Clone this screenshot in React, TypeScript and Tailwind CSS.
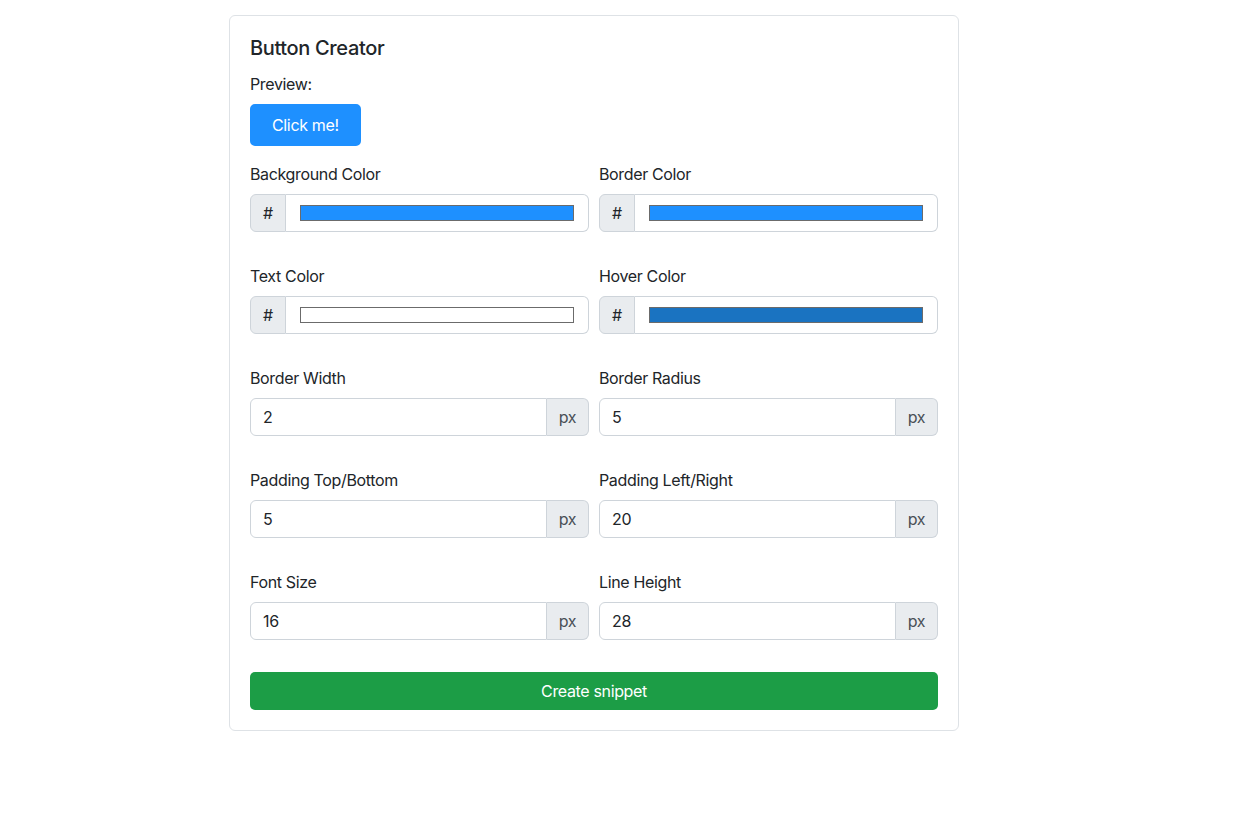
import React from 'react';

const font = { fontFamily: 'Inter, "Noto Sans", sans-serif' };

function ColorField({ label, color }: { label: string; color: string }) {
  return (
    <div className="flex flex-col">
      <label className="text-[16px] leading-6 text-[#212529] mb-2">{label}</label>
      <div className="flex h-[38px]">
        <span className="w-[36px] flex items-center justify-center bg-[#e9ecef] border border-[#ced4da] rounded-l-[6px] text-[16px] text-[#212529]">
          #
        </span>
        <div className="flex-1 border border-l-0 border-[#ced4da] rounded-r-[6px] bg-white pl-[14px] pr-[14px] py-[10px]">
          <div className="w-full h-full border border-[#6b6b6b]" style={{ backgroundColor: color }} />
        </div>
      </div>
    </div>
  );
}

function PxField({ label, value }: { label: string; value: string }) {
  return (
    <div className="flex flex-col">
      <label className="text-[16px] leading-6 text-[#212529] mb-2">{label}</label>
      <div className="flex h-[38px]">
        <div className="flex-1 flex items-center px-3 border border-[#ced4da] rounded-l-[6px] bg-white text-[16px] text-[#212529]">
          {value}
        </div>
        <span className="w-[42px] flex items-center justify-center bg-[#e9ecef] border border-l-0 border-[#ced4da] rounded-r-[6px] text-[16px] text-[#495057]">
          px
        </span>
      </div>
    </div>
  );
}

export default function App() {
  return (
    <div className="min-h-screen bg-white tracking-[-0.022em]" style={font}>
      <div className="pt-[15px] pl-[229px]">
        <div className="w-[730px] border border-[#dee2e6] rounded-[6px] p-5">
          <h5 className="text-[20px] leading-6 font-medium text-[#212529]">Button Creator</h5>
          <p className="mt-3 text-[16px] leading-6 text-[#212529]">Preview:</p>
          <div className="mt-2">
            <button
              className="text-white text-[16px] leading-[28px] py-[5px] px-5 rounded-[5px] border-2 border-[#1e90ff] bg-[#1e90ff] tracking-[-0.022em]"
            >
              Click me!
            </button>
          </div>
          <div className="mt-4 grid grid-cols-2 gap-x-[10px] gap-y-8">
            <ColorField label="Background Color" color="#1e90ff" />
            <ColorField label="Border Color" color="#1e90ff" />
            <ColorField label="Text Color" color="#ffffff" />
            <ColorField label="Hover Color" color="#1a73c1" />
            <PxField label="Border Width" value="2" />
            <PxField label="Border Radius" value="5" />
            <PxField label="Padding Top/Bottom" value="5" />
            <PxField label="Padding Left/Right" value="20" />
            <PxField label="Font Size" value="16" />
            <PxField label="Line Height" value="28" />
          </div>
          <button className="mt-8 w-full h-[38px] rounded-[5px] bg-[#1c9d46] text-white text-[16px] tracking-[-0.022em]">
            Create snippet
          </button>
        </div>
      </div>
    </div>
  );
}
